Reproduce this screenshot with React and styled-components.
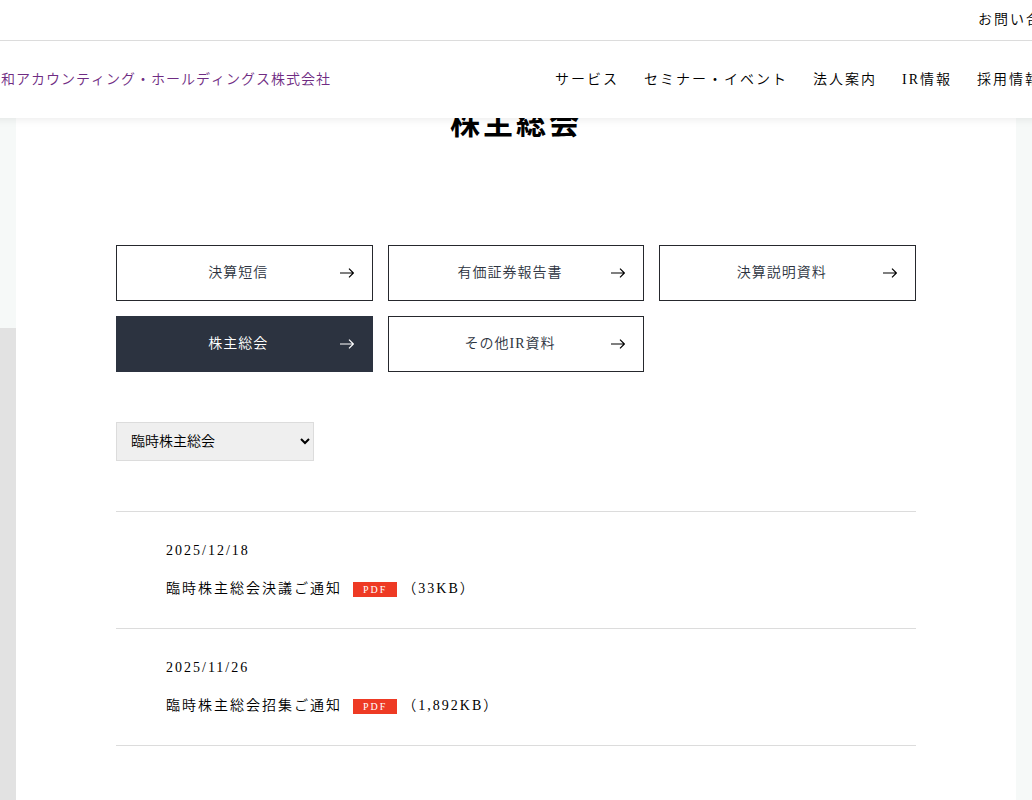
import React from "react";
import styled, { createGlobalStyle } from "styled-components";

const GlobalStyle = createGlobalStyle`
  *, *::before, *::after { box-sizing: border-box; }
  body {
    margin: 0;
    overflow-x: hidden;
    background: #f6f9f8;
    color: #000;
    font-family: "Liberation Serif", "Noto Sans CJK JP", serif;
    font-size: 14px;
    font-weight: 350;
    line-height: 28px;
    letter-spacing: 2px;
  }
  a { color: inherit; text-decoration: none; }
`;

const Header = styled.header`
  position: fixed;
  top: 0;
  left: 0;
  right: 0;
  z-index: 10;
  overflow: hidden;
  background: #fff;
  white-space: nowrap;
`;

const HeaderShadow = styled.div`
  position: fixed;
  top: 0;
  left: -20px;
  right: -20px;
  z-index: 9;
  height: 118px;
  box-shadow: 0 0 10px rgba(0, 0, 0, 0.1);
`;

const UtilityBar = styled.div`
  display: flex;
  justify-content: flex-end;
  min-width: 1074px;
  padding: 6px 0;
  border-bottom: 1px solid #dcdcdc;
`;

const MainBar = styled.div`
  display: flex;
  align-items: center;
  justify-content: space-between;
  min-width: 1074px;
  padding: 25px 33px 24px 1px;
`;

const Brand = styled.a`
  && { color: #6f2c83; }
  letter-spacing: 1px;
  font-kerning: none;
`;

const Nav = styled.nav`
  display: flex;
  gap: 25px;
`;

const Page = styled.div`
  min-height: 100vh;
  background: linear-gradient(#e2e2e2, #e2e2e2) no-repeat 0 328px / 50% 100%;
`;

const Main = styled.main`
  max-width: 1000px;
  min-height: 100vh;
  margin: 0 auto;
  padding: 108px 100px 54px;
  background: #fff;
`;

const Title = styled.h1`
  margin: 0 0 105px;
  font-size: 30px;
  line-height: 32px;
  letter-spacing: 3px;
  text-align: center;
`;

const Categories = styled.nav`
  display: grid;
  grid-template-columns: repeat(3, 1fr);
  gap: 15px;
  margin-bottom: 50px;
`;

const CategoryLink = styled.a`
  && { color: ${(p) => (p.$active ? "#fff" : "#2c3340")}; }
  display: flex;
  align-items: center;
  height: 56px;
  padding: 0 18px 0 20px;
  border: 1px solid ${(p) => (p.$active ? "#2c3340" : "#26282d")};
  background: ${(p) => (p.$active ? "#2c3340" : "#fff")};
  letter-spacing: 1px;
`;

const CategoryLabel = styled.span`
  flex: 1;
  text-align: center;
`;

const ArrowIcon = styled.svg`
  flex: none;
  width: 14px;
  height: 12px;
  fill: none;
  stroke: ${(p) => (p.$active ? "#fff" : "#000")};
  stroke-width: 1.2;
`;

const YearSelect = styled.select`
  display: block;
  width: 198px;
  height: 39px;
  margin: 0 0 50px;
  padding: 0 10px;
  border: 1px solid #dcdcdc;
  border-radius: 0;
  background: #efefef;
  color: #000;
  font-family: inherit;
  font-size: 14px;
  font-weight: inherit;
`;

const NoticeList = styled.ul`
  margin: 0;
  padding: 0;
  border-top: 1px solid #dcdcdc;
  list-style: none;
`;

const Notice = styled.li`
  display: flex;
  flex-direction: column;
  gap: 10px;
  padding: 25px 50px;
  border-bottom: 1px solid #dcdcdc;
`;

const NoticeDate = styled.time`
  display: block;
`;

const NoticeLink = styled.a`
  display: flex;
  align-items: center;
`;

const PdfBadge = styled.span`
  margin: 0 5px 0 11px;
  padding: 0 10px;
  background: #ee3a24;
  color: #fff;
  font-size: 10px;
  line-height: 15px;
`;

const navItems = ["サービス", "セミナー・イベント", "法人案内", "IR情報", "採用情報"];

const categories = [
  { label: "決算短信" },
  { label: "有価証券報告書" },
  { label: "決算説明資料" },
  { label: "株主総会", active: true },
  { label: "その他IR資料" },
];

const notices = [
  { date: "2025/12/18", title: "臨時株主総会決議ご通知", size: "33KB" },
  { date: "2025/11/26", title: "臨時株主総会招集ご通知", size: "1,892KB" },
];

export default function App() {
  return (
    <>
      <GlobalStyle />
      <HeaderShadow />
      <Header>
        <UtilityBar>
          <a href="#contact">お問い合わせ</a>
        </UtilityBar>
        <MainBar>
          <Brand href="#top">和アカウンティング・ホールディングス株式会社</Brand>
          <Nav>
            {navItems.map((item) => (
              <a href="#nav" key={item}>{item}</a>
            ))}
          </Nav>
        </MainBar>
      </Header>
      <Page>
        <Main>
          <Title>株主総会</Title>
          <Categories>
            {categories.map(({ label, active }) => (
              <CategoryLink href="#category" key={label} $active={active}>
                <CategoryLabel>{label}</CategoryLabel>
                <ArrowIcon viewBox="0 0 14 12" $active={active} aria-hidden="true">
                  <path d="M0 6H13.4M9 1.6L13.4 6L9 10.4" />
                </ArrowIcon>
              </CategoryLink>
            ))}
          </Categories>
          <YearSelect aria-label="株主総会の種類" defaultValue="extra">
            <option value="extra">臨時株主総会</option>
          </YearSelect>
          <NoticeList>
            {notices.map(({ date, title, size }) => (
              <Notice key={date}>
                <NoticeDate>{date}</NoticeDate>
                <NoticeLink href="#pdf">
                  {title}
                  <PdfBadge>PDF</PdfBadge>
                  （{size}）
                </NoticeLink>
              </Notice>
            ))}
          </NoticeList>
        </Main>
      </Page>
    </>
  );
}
